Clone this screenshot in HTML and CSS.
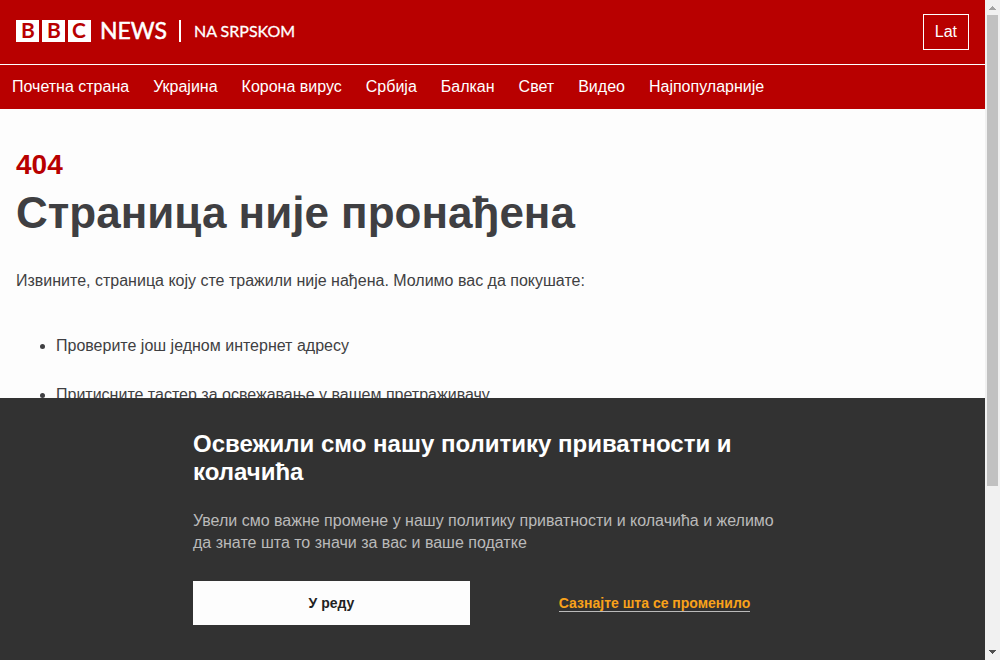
FILE: index.html
```html
<!DOCTYPE html>
<html lang="sr-Cyrl">
<head>
<meta charset="utf-8">
<meta name="viewport" content="width=device-width, initial-scale=1">
<title>Страница није пронађена - BBC News на српском</title>
<link rel="stylesheet" href="styles.css">
</head>
<body>
<div class="viewport">
  <div class="page">
    <header class="header">
      <div class="brand-bar">
        <a class="brand" href="#" aria-label="BBC News на српском">
          <svg class="logo" width="280" height="24" viewBox="0 0 280 24" aria-hidden="true">
            <path fill="#fff" d="M0 0h23v22H0zM26 0h23v22H26zM52 0h23v22H52zM163 0h2v22h-2z"/>
            <g class="logo-block" text-anchor="middle">
              <text x="12" y="18">B</text>
              <text x="38" y="18">B</text>
              <text x="63" y="18">C</text>
            </g>
            <text class="logo-news" x="84" y="19">NEWS</text>
            <text class="logo-service" x="178" y="17">NA SRPSKOM</text>
          </svg>
        </a>
        <a class="script-switch" href="#">Lat</a>
      </div>
      <nav class="nav">
        <ul class="nav-list">
          <li><a href="#">Почетна страна</a></li>
          <li><a href="#">Украјина</a></li>
          <li><a href="#">Корона вирус</a></li>
          <li><a href="#">Србија</a></li>
          <li><a href="#">Балкан</a></li>
          <li><a href="#">Свет</a></li>
          <li><a href="#">Видео</a></li>
          <li><a href="#">Најпопуларније</a></li>
        </ul>
      </nav>
    </header>
    <main class="content">
      <h1 class="title"><span class="status">404</span>Страница није пронађена</h1>
      <p class="lead">Извините, страница коју сте тражили није нађена. Молимо вас да покушате:</p>
      <ul class="tips">
        <li>Проверите још једном интернет адресу</li>
        <li>Притисните тастер за освежавање у вашем претраживачу</li>
      </ul>
    </main>
    <section class="consent" aria-labelledby="consent-title">
      <div class="consent-inner">
        <h2 class="consent-title" id="consent-title">Освежили смо нашу политику приватности и колачића</h2>
        <p class="consent-text">Увели смо важне промене у нашу политику приватности и колачића и желимо да знате шта то значи за вас и ваше податке</p>
        <div class="consent-actions">
          <button class="accept" type="button">У реду</button>
          <a class="more" href="#">Сазнајте шта се променило</a>
        </div>
      </div>
    </section>
  </div>
  <div class="scrollbar" aria-hidden="true">
    <svg class="arrow" width="15" height="15" viewBox="0 0 15 15" shape-rendering="crispEdges"><path fill="#a3a3a3" d="M7 6h1v1h1v1h1v1h1v1H4V9h1V8h1V7h1z"/></svg>
    <div class="track"><div class="thumb"></div></div>
    <svg class="arrow" width="15" height="15" viewBox="0 0 15 15" shape-rendering="crispEdges"><path fill="#505050" d="M4 5h7v1h-1v1H9v1H8v1H7V8H6V7H5V6H4z"/></svg>
  </div>
</div>
</body>
</html>
```
FILE: styles.css
```css
* {
  box-sizing: border-box;
}

body {
  margin: 0;
  background: #fdfdfd;
  color: #3f3f42;
  font: 16px/22px "Liberation Sans", Arial, Helvetica, sans-serif;
}

.viewport {
  display: flex;
  height: 100vh;
  overflow: hidden;
}

.page {
  position: relative;
  flex: 1;
  min-width: 0;
  overflow: hidden;
}

.header {
  background: #b80000;
  color: #fff;
}

.brand-bar {
  display: flex;
  align-items: center;
  justify-content: space-between;
  min-height: 64px;
  padding: 0 16px;
}

.brand,
.logo {
  display: block;
}

.logo {
  overflow: visible;
}

.logo-block {
  fill: #b80000;
  font: bold 21px Lato, sans-serif;
}

.logo-news {
  fill: #fff;
  stroke: #fff;
  stroke-width: 0.5px;
  font: 23px Lato, sans-serif;
}

.logo-service {
  fill: #fff;
  stroke: #fff;
  stroke-width: 0.3px;
  font: 16px Lato, sans-serif;
}

.script-switch {
  padding: 6px 11px;
  border: 1px solid #fff;
  color: #fff;
  text-decoration: none;
}

.nav {
  border-top: 1px solid #fff;
}

.nav-list {
  display: flex;
  flex-wrap: wrap;
  margin: 0;
  padding: 0;
  list-style: none;
}

.nav-list a {
  display: block;
  padding: 11px 12px;
  color: #fff;
  text-decoration: none;
}

.content {
  padding: 40px 16px;
}

.title {
  margin: 0;
  font-size: 44px;
  line-height: 48px;
}

.status {
  display: block;
  margin-bottom: 8px;
  color: #b80000;
  font-size: 28px;
  line-height: 32px;
}

.lead {
  margin: 33px 0 43px;
}

.tips {
  margin: 0;
  padding: 0 0 0 40px;
}

.tips li {
  padding-bottom: 27px;
}

.consent {
  position: absolute;
  right: 0;
  bottom: 0;
  left: 0;
  padding: 32px 16px 35px 17px;
  background: #323232;
}

.consent-inner {
  max-width: 600px;
  margin: 0 auto;
}

.consent-title {
  margin: 0 0 24px;
  color: #fff;
  font-size: 24px;
  line-height: 28px;
}

.consent-text {
  margin: 0 0 27px;
  color: #bababa;
}

.consent-actions {
  display: grid;
  grid-template-columns: 1fr 1fr;
  gap: 46px;
  align-items: center;
  justify-items: center;
  font-size: 14px;
  font-weight: bold;
  line-height: 16px;
}

.accept {
  width: 100%;
  height: 44px;
  border: 0;
  background: #fdfdfd;
  color: #222;
  font: inherit;
}

.more {
  border-bottom: 1px solid #bababa;
  color: #f9a21a;
  text-decoration: none;
}

.scrollbar {
  display: flex;
  flex-direction: column;
  width: 15px;
  background: #f1f1f1;
}

.arrow {
  flex: none;
}

.track {
  flex: 1;
  padding: 0 2px;
}

.thumb {
  height: 471px;
  background: #c1c1c1;
}
```
